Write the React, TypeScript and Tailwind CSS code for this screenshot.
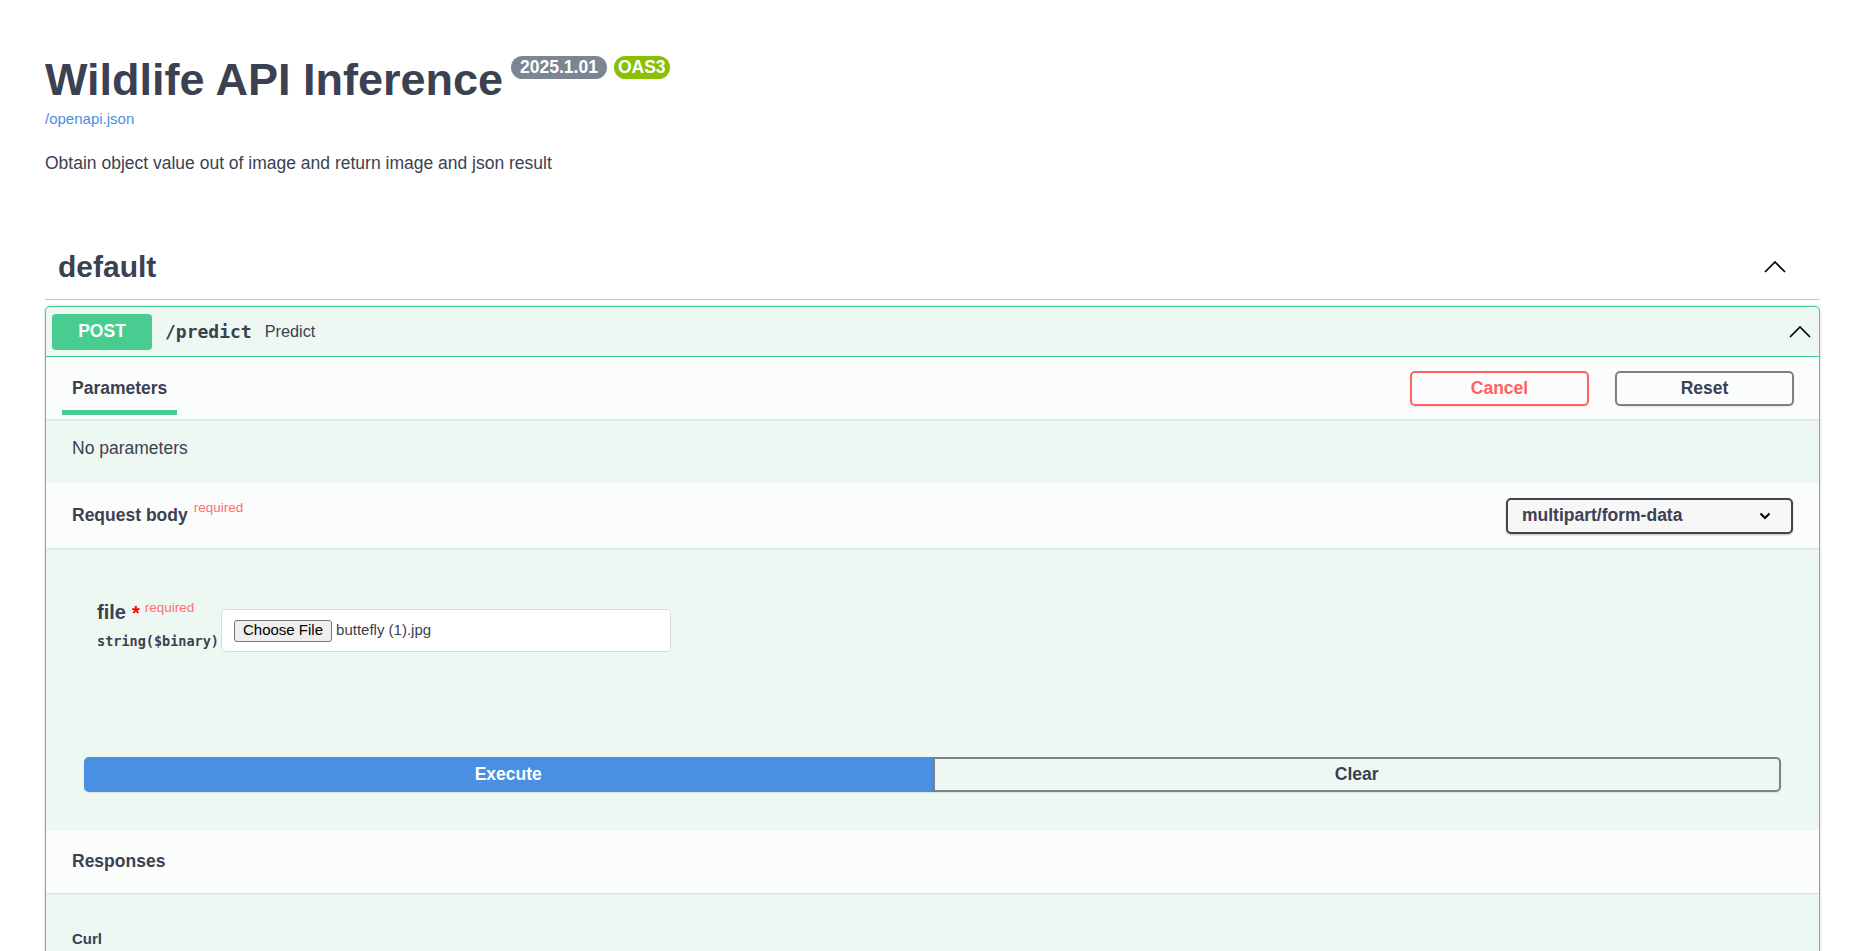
import React from "react";

const Chevron = ({ className = "" }: { className?: string }) => (
  <svg width="22" height="12" viewBox="0 0 22 12" className={className} aria-hidden>
    <polyline points="1,11 11,1 21,11" fill="none" stroke="#000" strokeWidth="1.7" />
  </svg>
);

export default function App() {
  return (
    <div className="min-h-screen bg-white text-[#3b4151] font-['Liberation_Sans',Arial,sans-serif]">
      <div className="pl-[45px] pr-[40px]">
        {/* Info */}
        <div className="pt-[54px]">
          <div className="flex items-start">
            <h2 className="text-[45px] font-bold leading-[52px] m-0">Wildlife API Inference</h2>
            <span className="ml-[8px] mt-[2px] h-[23px] rounded-full bg-[#7d8492] px-[9px] text-[17.5px] font-bold leading-[23px] text-white">
              2025.1.01
            </span>
            <span className="ml-[7px] mt-[2px] h-[23px] rounded-full bg-[#89bf04] px-[4px] text-[17.5px] font-bold leading-[23px] text-white">
              OAS3
            </span>
          </div>
          <div className="mt-[4px] text-[15px] leading-[18px]">
            <a className="text-[#4990e2]" href="#">/openapi.json</a>
          </div>
          <p className="mt-[25px] text-[17.5px] leading-[21px]">
            Obtain object value out of image and return image and json result
          </p>
        </div>

        {/* Tag header */}
        <div className="mt-[61px] flex h-[65px] items-center justify-between border-b border-[rgba(59,65,81,0.3)] pl-[13px] pr-[34px]">
          <h3 className="text-[30px] font-bold leading-[36px]">default</h3>
          <Chevron />
        </div>

        {/* Opblock */}
        <div className="mt-[6px] overflow-hidden rounded-[5px] border border-[#49cc90] bg-[#edf8f3] shadow-[0_0_3px_rgba(0,0,0,0.19)]">
          {/* Summary */}
          <div className="flex h-[50px] items-center border-b border-[#49cc90] pl-[6px] pr-[8px]">
            <span className="flex h-[36px] w-[100px] items-center justify-center rounded-[4px] bg-[#49cc90] text-[17.5px] font-bold text-white">
              POST
            </span>
            <span className="ml-[13px] font-['DejaVu_Sans_Mono',monospace] text-[18px] font-bold">/predict</span>
            <span className="ml-[13px] text-[16.25px]">Predict</span>
            <span className="flex-1" />
            <Chevron />
          </div>

          {/* Parameters header */}
          <div className="flex h-[62px] items-center bg-[#fbfdfc] pl-[26px] pr-[25px] shadow-[0_1px_2px_rgba(0,0,0,0.1)]">
            <div className="relative">
              <span className="text-[17.5px] font-bold">Parameters</span>
              <span className="absolute left-[-10px] right-[-10px] top-[35px] h-[5px] bg-[#49cc90]" />
            </div>
            <span className="flex-1" />
            <button className="h-[35px] w-[179px] rounded-[5px] border-2 border-[#ff6060] bg-transparent text-[17.5px] font-bold text-[#ff6060] shadow-[0_1px_2px_rgba(0,0,0,0.1)]">
              Cancel
            </button>
            <button className="ml-[26px] h-[35px] w-[179px] rounded-[5px] border-2 border-[#808080] bg-transparent text-[17.5px] font-bold text-[#3b4151] shadow-[0_1px_2px_rgba(0,0,0,0.1)]">
              Reset
            </button>
          </div>

          {/* No parameters */}
          <div className="h-[64px] pl-[26px] pt-[19px] text-[17.5px] leading-[21px]">No parameters</div>

          {/* Request body header */}
          <div className="flex h-[65px] items-center bg-[#fbfdfc] pl-[26px] pr-[26px] shadow-[0_1px_2px_rgba(0,0,0,0.1)]">
            <span className="text-[17.5px] font-bold">Request body</span>
            <span className="ml-[6px] mb-[14px] text-[13.5px] text-[#ff6f6f]">required</span>
            <span className="flex-1" />
            <div className="flex h-[36px] w-[287px] items-center justify-between rounded-[5px] border-2 border-[#41444e] bg-[#f7f7f7] pl-[14px] pr-[20px] shadow-[0_1px_2px_rgba(0,0,0,0.25)]">
              <span className="text-[17.5px] font-bold">multipart/form-data</span>
              <svg width="12" height="8" viewBox="0 0 12 8" aria-hidden>
                <polyline points="1.5,1.5 6,6 10.5,1.5" fill="none" stroke="#000" strokeWidth="2" />
              </svg>
            </div>
          </div>

          {/* Body */}
          <div className="pt-[52px] pb-[38px]">
            <div className="flex items-start pl-[51px]">
              <div className="w-[124px]">
                <div className="flex items-start">
                  <span className="text-[20px] font-bold leading-[24px]">file</span>
                  <span className="ml-[6px] mt-[3px] text-[20px] font-bold leading-[20px] text-[#ff0000]">*</span>
                  <span className="ml-[5px] text-[13.5px] leading-[16px] text-[#ff6f6f]">required</span>
                </div>
                <div className="mt-[8px] font-['DejaVu_Sans_Mono',monospace] text-[13.5px] font-bold leading-[18px] whitespace-nowrap">
                  string($binary)
                </div>
              </div>
              <div className="mt-[9px] flex h-[43px] w-[450px] items-center rounded-[5px] border border-[#d9d9d9] bg-white pl-[12px]">
                <span className="flex h-[22px] items-center rounded-[3px] border border-[#767676] bg-[#efefef] px-[8px] text-[15px] text-black">
                  Choose File
                </span>
                <span className="ml-[4px] text-[15px]">buttefly (1).jpg</span>
              </div>
            </div>

            <div className="mt-[105px] flex px-[38px]">
              <button className="h-[35px] flex-1 rounded-l-[5px] border-2 border-[#4990e2] bg-[#4990e2] text-[17.5px] font-bold text-white shadow-[0_1px_2px_rgba(0,0,0,0.1)]">
                Execute
              </button>
              <button className="h-[35px] flex-1 rounded-r-[5px] border-2 border-[#808080] bg-transparent text-[17.5px] font-bold text-[#3b4151] shadow-[0_1px_2px_rgba(0,0,0,0.1)]">
                Clear
              </button>
            </div>
          </div>

          {/* Responses header */}
          <div className="flex h-[63px] items-center bg-[#fbfdfc] pl-[26px] shadow-[0_1px_2px_rgba(0,0,0,0.1)]">
            <span className="text-[17.5px] font-bold">Responses</span>
          </div>

          {/* Responses inner */}
          <div className="pl-[26px] pt-[37px] pb-[40px]">
            <h4 className="text-[15px] font-bold leading-[18px]">Curl</h4>
            <div className="mt-[10px] h-[60px]" />
          </div>
        </div>
      </div>
    </div>
  );
}
